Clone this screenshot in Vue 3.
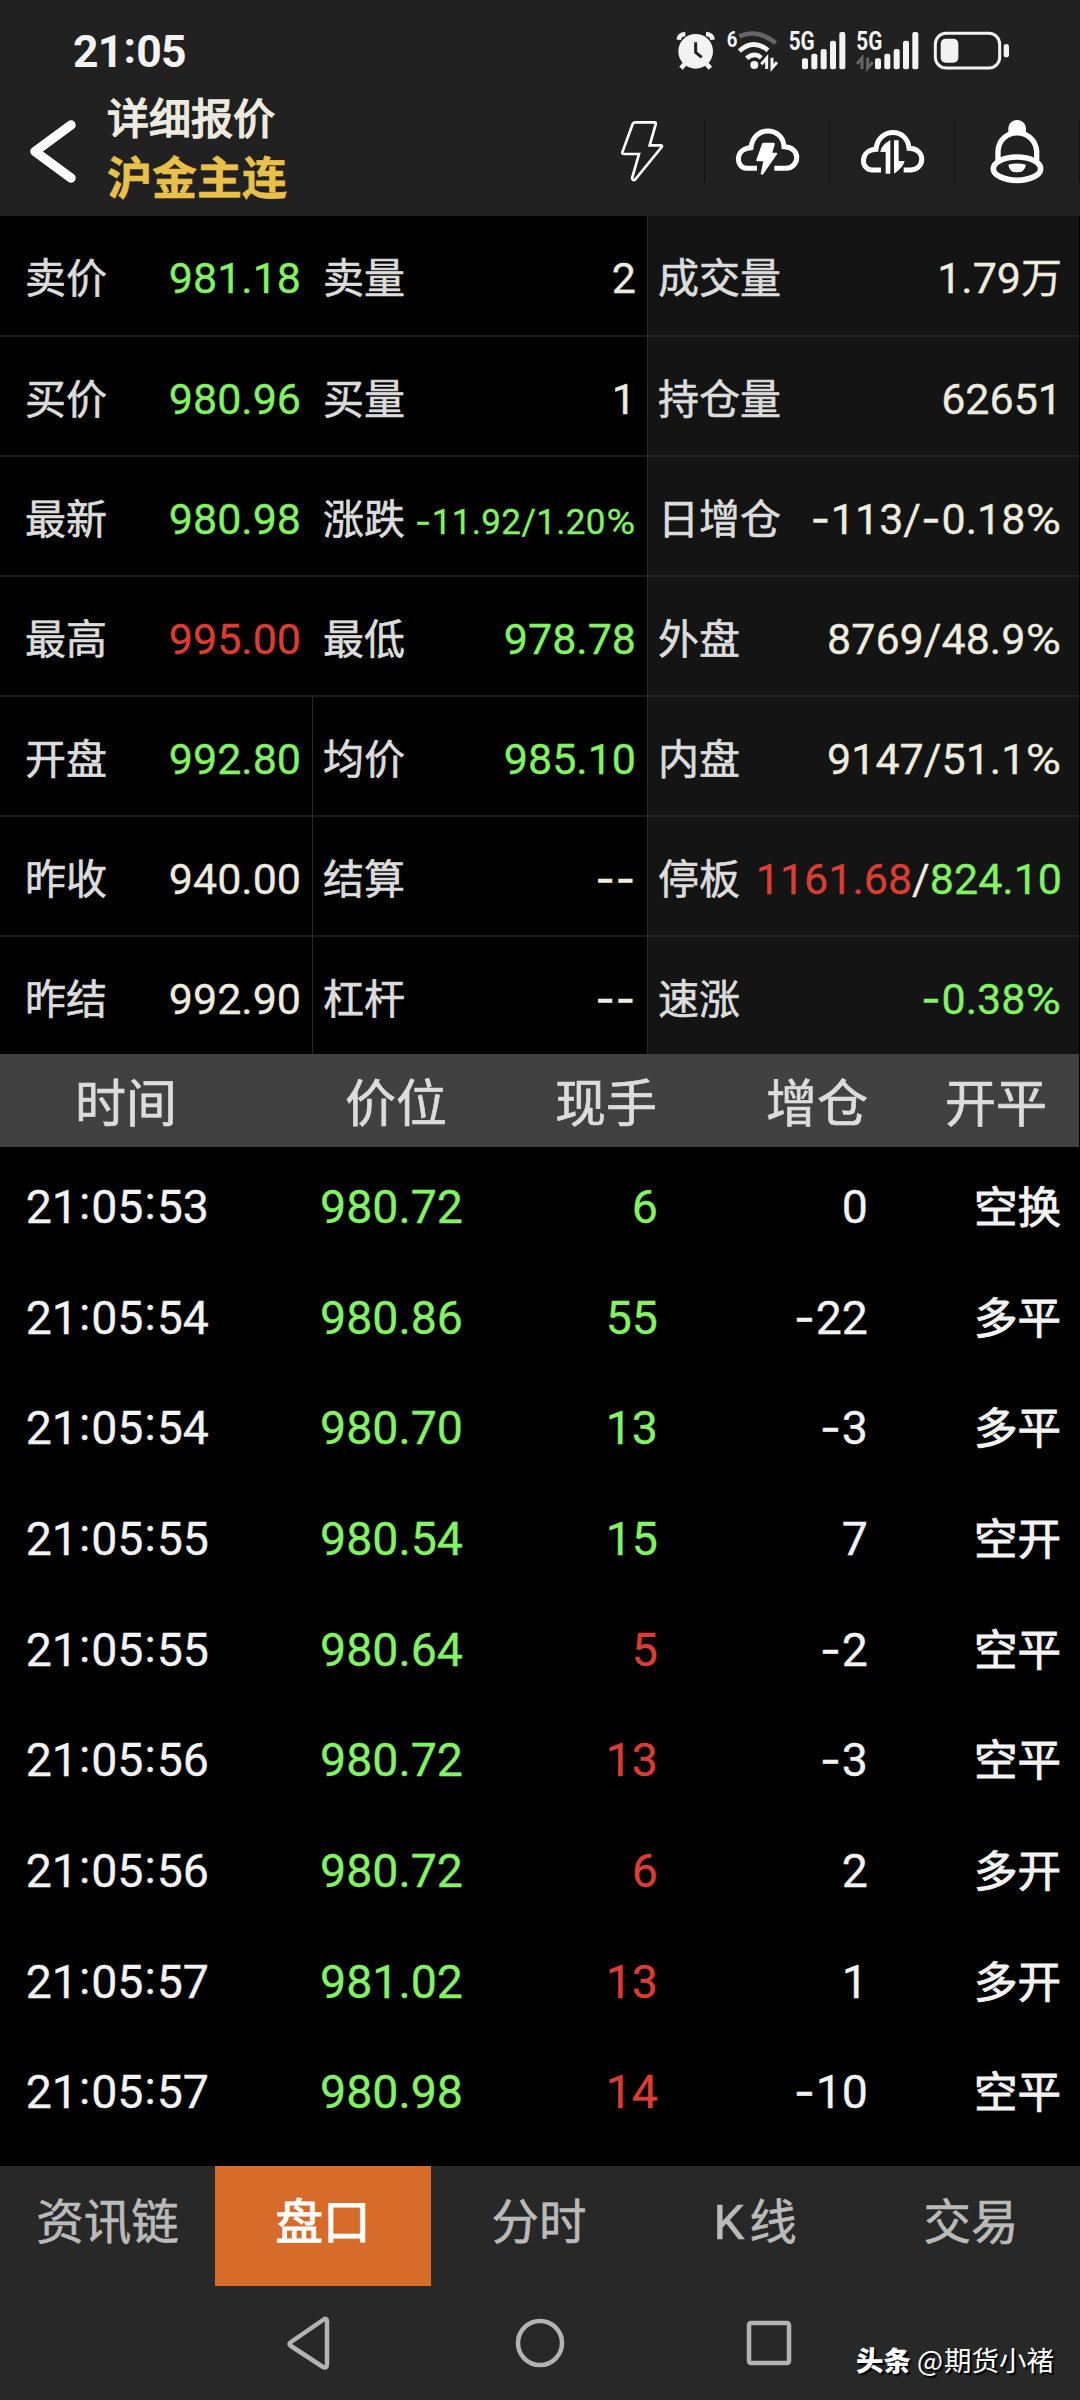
<template>
  <div class="screen">
    <div class="status-bar">
      <div class="clock">21<span class="colon">:</span>05</div>
      <div class="status-icons">
        <svg class="icon-alarm" viewBox="228 90 120 120">
          <circle cx="287" cy="154" r="52" fill="#f3f3f3" />
          <path d="M236 119q2-16 20-17M338 119q-2-16-20-17" class="thick" />
          <path d="M254 192l-11 13M320 192l11 13" class="thick" />
          <path d="M287 127v30l18 15" fill="none" stroke="#212121" stroke-width="9" />
        </svg>
        <svg class="icon-wifi" viewBox="378 90 159 120">
          <text x="380" y="140" font-size="68" textLength="32" lengthAdjust="spacingAndGlyphs">6</text>
          <path d="M418 109q55-24 109 20" class="thick dim" />
          <path d="M418 153q42-38 86-2" class="thick" />
          <path d="M440 175q23-20 44-2" class="thick" />
          <circle cx="463" cy="195" r="12" fill="#f3f3f3" />
          <path d="M484 193l16-19v33M516 173v31l15-17" class="thin" />
        </svg>
        <svg class="icon-signal" viewBox="564 90 177 120">
          <text x="566" y="150" font-size="75" textLength="78" lengthAdjust="spacingAndGlyphs">5G</text>
          <rect v-for="b in bars" :key="b.h" :x="b.x" :y="208 - b.h" :height="b.h" width="18" rx="6" fill="#f3f3f3" />
        </svg>
        <svg class="icon-signal-two" viewBox="765 90 195 120">
          <text x="769" y="150" font-size="75" textLength="78" lengthAdjust="spacingAndGlyphs">5G</text>
          <path d="M771 191l15-17v33M803 173v31l15-17" class="thin dim" />
          <rect v-for="b in bars" :key="b.h" :x="b.x + 219" :y="208 - b.h" :height="b.h" width="18" rx="6" fill="#f3f3f3" />
        </svg>
        <svg class="icon-battery" viewBox="999 90 231 120">
          <rect x="1006" y="100" width="193" height="104" rx="32" fill="none" stroke="#f3f3f3" stroke-width="9" />
          <rect x="1022" y="116" width="53" height="72" rx="15" fill="#f3f3f3" />
          <rect x="1211" y="132" width="16" height="40" rx="8" fill="#f3f3f3" />
        </svg>
      </div>
    </div>

    <header class="nav-header">
      <svg class="back" viewBox="0 0 60 70">
        <path d="M50 8L14 34.500L50 61" />
      </svg>
      <div class="titles">
        <div class="title">详细报价</div>
        <div class="contract">沪金主连</div>
      </div>
      <div class="actions">
        <div class="action">
          <svg viewBox="22 354 210 201">
            <path d="M106 367h58q6 0 4 6l-18 63h33q6 0 3 5l-79 97q-8 6-10-3l21-73H73q-6 0-5-5l31-85q2-5 7-5z" stroke-width="8" />
          </svg>
        </div>
        <div class="action">
          <svg viewBox="397 354 210 201">
            <path d="M472 505h-31c-34-2-36-60 13-62c7-68 95-65 99-3c52 1 48 63 6 65h-35" stroke-width="15" />
            <path d="M487 432q1-4 5-4h29q6 0 4 6l-7 24h12q5 0 2 5l-41 59q-5 5-8-1l8-37h-18q-4 0-3-5z" fill="#fff" stroke="none" />
          </svg>
        </div>
        <div class="action">
          <svg viewBox="772 354 210 201">
            <path d="M844 510h-28c-34-2-36-60 13-62c7-68 95-65 99-3c52 1 48 63 6 65h-22" stroke-width="15" />
            <path d="M858 521V456h-16q2-20 30-36v101zM883 421h14v62h18q-4 20-32 38z" fill="#fff" stroke="none" />
          </svg>
        </div>
        <div class="action">
          <svg viewBox="1147 354 210 201">
            <path d="M1226 396v-11c2-33 50-33 53 0v11z" fill="#fff" stroke="none" />
            <path d="M1195 484v-30c4-74 110-74 116 0v30" stroke-width="16" />
            <ellipse cx="1252" cy="506" rx="71" ry="35" stroke-width="17" />
            <path d="M1226 494q26-7 53 0q-4 23-27 23t-26-23z" fill="#fff" stroke="none" />
          </svg>
        </div>
      </div>
    </header>

    <section class="quotes">
      <div v-for="(row, r) in quotes" :key="r" class="quote-row">
        <div v-for="(cell, c) in row" :key="c" class="quote-cell" :class="{ split: c === 0 && r > 3, side: c === 2 }">
          <span class="label">{{ cell.label }}</span>
          <span class="value" :class="{ small: cell.small }">
            <span v-for="(seg, s) in cell.value" :key="s" :class="seg.color">
              <span v-for="(p, k) in split(seg.text)" :key="k" :class="charClass(p)">{{ p }}</span>
            </span>
          </span>
        </div>
      </div>
    </section>

    <section class="ticks">
      <div class="tick-head">
        <span v-for="h in heads" :key="h">{{ h }}</span>
      </div>
      <div class="tick-list">
        <div v-for="(t, i) in ticks" :key="i" class="tick-row">
          <span class="time"><span v-for="(p, k) in split(t[0])" :key="k" :class="charClass(p)">{{ p }}</span></span>
          <span class="green">{{ t[1] }}</span>
          <span :class="t[3]">{{ t[2] }}</span>
          <span><span v-for="(p, k) in split(t[4])" :key="k" :class="charClass(p)">{{ p }}</span></span>
          <span class="kind">{{ t[5] }}</span>
        </div>
      </div>
    </section>

    <nav class="tabs">
      <div
        v-for="tab in tabs"
        :key="tab"
        class="tab"
        :class="{ active: tab === activeTab }"
        @click="activeTab = tab"
      >
        <template v-if="tab === 'K线'"><span class="latin">K</span>线</template>
        <template v-else>{{ tab }}</template>
      </div>
    </nav>

    <div class="system-nav">
      <svg viewBox="0 0 1080 114">
        <path d="M327 36v42q0 5-4 3l-32-21q-3-2 0-4l32-22q4-3 4 2z" />
        <circle cx="540" cy="57" r="22" />
        <rect x="749" y="37" width="40" height="40" rx="2" />
      </svg>
      <div class="watermark"><b>头条</b><span class="at">@</span>期货小褚</div>
    </div>
  </div>
</template>

<script setup>
import { ref } from 'vue'

const activeTab = ref('盘口')
const tabs = ['资讯链', '盘口', '分时', 'K线', '交易']
const heads = ['时间', '价位', '现手', '增仓', '开平']

const bars = [
  { x: 606, h: 33 },
  { x: 634, h: 47 },
  { x: 662, h: 61 },
  { x: 690, h: 86 },
  { x: 718, h: 112 }
]

const cell = (label, text, color = 'cream', small = false) => ({
  label,
  small,
  value: Array.isArray(text) ? text : [{ text, color }]
})

const quotes = [
  [cell('卖价', '981.18', 'green'), cell('卖量', '2'), cell('成交量', '1.79万')],
  [cell('买价', '980.96', 'green'), cell('买量', '1'), cell('持仓量', '62651')],
  [cell('最新', '980.98', 'green'), cell('涨跌', '-11.92/1.20%', 'green', true), cell('日增仓', '-113/-0.18%')],
  [cell('最高', '995.00', 'red'), cell('最低', '978.78', 'green'), cell('外盘', '8769/48.9%')],
  [cell('开盘', '992.80', 'green'), cell('均价', '985.10', 'green'), cell('内盘', '9147/51.1%')],
  [
    cell('昨收', '940.00'),
    cell('结算', '--'),
    cell('停板', [
      { text: '1161.68', color: 'red' },
      { text: '/', color: 'cream' },
      { text: '824.10', color: 'green' }
    ])
  ],
  [cell('昨结', '992.90'), cell('杠杆', '--'), cell('速涨', '-0.38%', 'green')]
]

// 时间, 价位, 现手, 现手颜色, 增仓, 开平
const ticks = [
  ['21:05:53', '980.72', '6', 'green', '0', '空换'],
  ['21:05:54', '980.86', '55', 'green', '-22', '多平'],
  ['21:05:54', '980.70', '13', 'green', '-3', '多平'],
  ['21:05:55', '980.54', '15', 'green', '7', '空开'],
  ['21:05:55', '980.64', '5', 'red', '-2', '空平'],
  ['21:05:56', '980.72', '13', 'red', '-3', '空平'],
  ['21:05:56', '980.72', '6', 'red', '2', '多开'],
  ['21:05:57', '981.02', '13', 'red', '1', '多开'],
  ['21:05:57', '980.98', '14', 'red', '-10', '空平']
]

// 符号的字宽与数字不同, 单独拆出来排版
const split = (text) => text.split(/([-%:万])/).filter(Boolean)
const charClass = (p) => ({ '-': 'dash', '%': 'percent', ':': 'colon', '万': 'unit' })[p]
</script>

<style>
body {
  margin: 0;
  background: #000;
}
</style>

<style scoped>
.screen {
  width: 1080px;
  height: 2400px;
  display: flex;
  flex-direction: column;
  overflow: hidden;
  background: #000;
  color: #f3f3f3;
  font-family: Roboto, 'Noto Sans CJK SC', sans-serif;
}

.status-bar {
  height: 86px;
  box-sizing: border-box;
  padding: 0 70px 0 73px;
  display: flex;
  justify-content: space-between;
  background: #212121;
}

.clock {
  font-size: 44.5px;
  font-weight: 700;
  line-height: 104px;
  letter-spacing: -0.8px;
}

.status-icons {
  display: flex;
  padding-top: 30px;
}

.status-icons svg {
  height: 40px;
  overflow: visible;
}

.status-icons text {
  fill: #f3f3f3;
  font-weight: 700;
}

.icon-alarm {
  width: 40px;
  margin-right: 10px;
}

.icon-wifi {
  width: 53px;
  margin-right: 9px;
}

.icon-signal {
  width: 59px;
  margin-right: 8px;
}

.icon-signal-two {
  width: 65px;
  margin-right: 13px;
}

.icon-battery {
  width: 77px;
}

.thick {
  fill: none;
  stroke: #f3f3f3;
  stroke-width: 14;
}

.thin {
  fill: none;
  stroke: #f3f3f3;
  stroke-width: 9;
}

.dim {
  stroke: #666;
}

.nav-header {
  height: 130px;
  display: flex;
  background: #212121;
}

.back {
  width: 60px;
  height: 70px;
  margin: 31px 0 0 21px;
}

.back path {
  fill: none;
  stroke: #fff;
  stroke-width: 9.5;
  stroke-linecap: round;
  stroke-linejoin: round;
}

.titles {
  flex: 1;
  padding-left: 26px;
  font-family: 'Noto Sans CJK SC', sans-serif;
  line-height: 60px;
}

.title {
  font-size: 42px;
  color: #edeadf;
  -webkit-text-stroke: 1.6px #edeadf;
}

.contract {
  font-size: 45px;
  font-weight: 700;
  color: #e8c04a;
  -webkit-text-stroke: 0.6px #e8c04a;
}

.actions {
  display: flex;
  height: 63px;
  margin-top: 34px;
}

.action {
  width: 125px;
  box-sizing: border-box;
  display: flex;
  align-items: center;
  justify-content: center;
  border-right: 1px solid #101010;
}

.action svg {
  width: 70px;
  height: 67px;
  flex-shrink: 0;
  fill: none;
  stroke: #fff;
}

.quotes {
  height: 838px;
}

.quote-row {
  height: 120px;
  display: grid;
  grid-template-columns: 313px 334px 433px;
}

.quote-row:first-child {
  height: 121px;
}

.quote-row:last-child {
  height: 117px;
}

.quote-cell {
  box-sizing: border-box;
  min-width: 0;
  display: flex;
  align-items: baseline;
  justify-content: space-between;
  padding: 0 11px 0 10px;
  border-bottom: 2px solid #1a1a1a;
  line-height: 118px;
  overflow: hidden;
  white-space: nowrap;
}

.quote-row:last-child .quote-cell {
  border-bottom: none;
}

.quote-cell:first-child {
  padding-left: 25px;
  padding-right: 12px;
}

.quote-cell.split {
  border-right: 1px solid #2b2b2b;
  padding-right: 11px;
}

.quote-cell.side {
  padding: 0 17px 0 10px;
  background: #131413;
  border-left: 1px solid #2b2b2b;
  border-bottom-color: #222322;
  border-right: 1px solid #000;
}

.label {
  font-family: 'Noto Sans CJK SC', sans-serif;
  font-size: 41px;
  color: #dcdcdc;
  -webkit-text-stroke: 0.6px #dcdcdc;
}

.value {
  display: flex;
  font-size: 43px;
  -webkit-text-stroke: 0.3px;
}

.value.small {
  font-size: 35px;
  letter-spacing: 0.35px;
}

.cream {
  color: #eeebdf;
}

.green {
  color: #83f363;
}

.red {
  color: #dc3d32;
}

.dash {
  font-family: Inter, sans-serif;
  letter-spacing: 0.6px;
}

.percent {
  display: inline-block;
  padding: 0 0.06em;
  transform: scaleX(1.12);
}

.colon {
  padding: 0 1px;
  line-height: 0;
  vertical-align: 4px;
}

.unit {
  font-size: 41px;
}

.tick-head {
  height: 93px;
  width: 1079px;
  display: grid;
  grid-template-columns: 208px 255px 194px 211px 194px;
  background: #414141;
  font-size: 51px;
  line-height: 93px;
  font-family: 'Noto Sans CJK SC', sans-serif;
  color: #dcdcdc;
  text-align: right;
  -webkit-text-stroke: 0.7px #dcdcdc;
}

.tick-head span:nth-child(1) {
  padding-right: 31px;
}

.tick-head span:nth-child(2) {
  padding-right: 16px;
}

.tick-head span:nth-child(5) {
  padding-right: 15px;
}

.tick-list {
  height: 1014px;
  padding-top: 5px;
}

.tick-row {
  height: 110.66px;
  display: grid;
  grid-template-columns: 209px 254px 195px 210px 193px;
  align-items: baseline;
  font-size: 46.5px;
  line-height: 106px;
  text-align: right;
  -webkit-text-stroke: 0.3px;
}

.kind {
  font-family: 'Noto Sans CJK SC', sans-serif;
  font-size: 43.5px;
  -webkit-text-stroke: 0.9px;
}

.tabs {
  height: 120px;
  display: flex;
  background: #282828;
}

.tab {
  width: 216px;
  box-sizing: border-box;
  text-align: center;
  font-family: 'Noto Sans CJK SC', sans-serif;
  font-size: 47.5px;
  line-height: 105px;
  color: #bababa;
  -webkit-text-stroke: 0.6px;
}

.tab:first-child {
  width: 215px;
}

.tab.active {
  background: #d76b2a;
  color: #fff;
  -webkit-text-stroke: 1.1px;
}

.latin {
  font-family: Roboto, sans-serif;
  font-size: 49px;
  letter-spacing: 5px;
}

.system-nav {
  position: relative;
  height: 114px;
  background: #282828;
}

.system-nav svg {
  display: block;
  width: 1080px;
  height: 114px;
  fill: none;
  stroke: #b3b3b3;
  stroke-width: 4.5;
  stroke-linejoin: round;
}

.watermark {
  position: absolute;
  right: 26px;
  bottom: 21px;
  display: flex;
  font-family: 'Noto Sans CJK SC', sans-serif;
  font-size: 27.5px;
  line-height: 40px;
  color: #fff;
  text-shadow: 2px 2px 1px #000;
}

.watermark b {
  font-weight: 900;
  margin-right: 6px;
}

.at {
  margin-right: 1px;
}
</style>
